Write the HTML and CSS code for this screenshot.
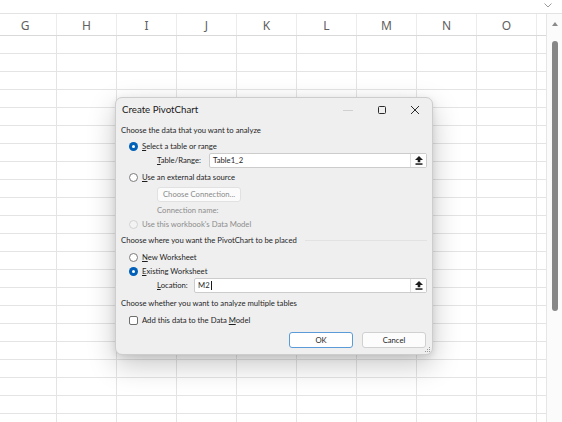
FILE: index.html
```html
<!DOCTYPE html>
<html lang="en">
<head>
<meta charset="utf-8">
<title>Create PivotChart</title>
<link rel="stylesheet" href="styles.css">
</head>
<body>
<div class="app">
  <div class="formula">
    <svg class="chev" width="8" height="5" viewBox="0 0 8 5"><path d="M0.5 0.5 L4 4 L7.5 0.5" fill="none" stroke="#9a9a9a" stroke-width="1"/></svg>
  </div>
  <div class="sheet">
    <div class="grid">
      <div class="colhead">
        <div class="ch first">G</div>
        <div class="ch">H</div>
        <div class="ch">I</div>
        <div class="ch">J</div>
        <div class="ch">K</div>
        <div class="ch">L</div>
        <div class="ch">M</div>
        <div class="ch">N</div>
        <div class="ch">O</div>
      </div>
      <div class="cells"></div>
    </div>
    <div class="vscroll">
      <svg class="up" width="6" height="4" viewBox="0 0 6 4"><path d="M3 0 L6 4 L0 4 Z" fill="#8a8a8a"/></svg>
      <div class="thumb"></div>
    </div>
  </div>

  <div class="dialog">
    <div class="titlebar">
      <span class="title">Create PivotChart</span>
      <span class="tb-icons">
        <svg class="tb-min" width="10" height="10" viewBox="0 0 10 10"><path d="M0 5.5 H10" stroke="#d0d0d0" stroke-width="1"/></svg>
        <svg class="tb-max" width="10" height="10" viewBox="0 0 10 10"><rect x="1.5" y="1.5" width="7" height="7" rx="1" fill="none" stroke="#2b2b2b" stroke-width="1"/></svg>
        <svg class="tb-close" width="10" height="10" viewBox="0 0 10 10"><path d="M1 1 L9 9 M9 1 L1 9" stroke="#2b2b2b" stroke-width="1"/></svg>
      </span>
    </div>

    <div class="body">
      <div class="row heading h-18">Choose the data that you want to analyze</div>
      <div class="row opt h-14"><span class="radio on"></span><span><u>S</u>elect a table or range</span></div>
      <div class="row field tbl">
        <span class="flabel"><u>T</u>able/Range:</span>
        <span class="input w-table"><span class="val">Table1_2</span><span class="upbtn"><svg width="8" height="9" viewBox="0 0 8 9"><path d="M4 0 L8 4 L5.3 4 L5.3 6.2 L2.7 6.2 L2.7 4 L0 4 Z" fill="#1c1c1c"/><rect x="0.5" y="7.3" width="7" height="1.5" fill="#1c1c1c"/></svg></span></span>
      </div>
      <div class="row opt h-18"><span class="radio"></span><span><u>U</u>se an external data source</span></div>
      <div class="row connrow"><span class="connbtn">Choose Connection...</span></div>
      <div class="row muted connname">Connection name:</div>
      <div class="row opt h-12 muted"><span class="radio off"></span><span>Use this workbook's Data Model</span></div>
      <div class="row heading h-20 grouped"><span>Choose where you want the PivotChart to be placed</span><span class="gline"></span></div>
      <div class="row opt h-14"><span class="radio"></span><span><u>N</u>ew Worksheet</span></div>
      <div class="row opt h-14"><span class="radio on"></span><span><u>E</u>xisting Worksheet</span></div>
      <div class="row field loc">
        <span class="flabel"><u>L</u>ocation:</span>
        <span class="input w-loc"><span class="val">M2<span class="caret"></span></span><span class="upbtn"><svg width="8" height="9" viewBox="0 0 8 9"><path d="M4 0 L8 4 L5.3 4 L5.3 6.2 L2.7 6.2 L2.7 4 L0 4 Z" fill="#1c1c1c"/><rect x="0.5" y="7.3" width="7" height="1.5" fill="#1c1c1c"/></svg></span></span>
      </div>
      <div class="row heading h-20">Choose whether you want to analyze multiple tables</div>
      <div class="row opt h-14"><span class="check"></span><span>Add this data to the Data <u>M</u>odel</span></div>
      <div class="row buttons">
        <span class="btn primary">OK</span>
        <span class="btn">Cancel</span>
      </div>
    </div>
    <svg class="grip" width="7" height="7" viewBox="0 0 7 7">
      <rect x="5" y="1" width="1" height="1" fill="#9a9a9a"/>
      <rect x="3" y="3" width="1" height="1" fill="#9a9a9a"/>
      <rect x="5" y="3" width="1" height="1" fill="#9a9a9a"/>
      <rect x="1" y="5" width="1" height="1" fill="#9a9a9a"/>
      <rect x="3" y="5" width="1" height="1" fill="#9a9a9a"/>
      <rect x="5" y="5" width="1" height="1" fill="#9a9a9a"/>
    </svg>
  </div>
</div>
</body>
</html>
```

FILE: styles.css
```css
* { box-sizing: border-box; }
html, body { margin: 0; padding: 0; background: #ffffff; }
body { font-family: "Noto Sans", "Open Sans", sans-serif; color: #1e1e1e; }

.app {
  position: relative;
  width: 562px;
  height: 422px;
  overflow: hidden;
  background: #ffffff;
}

/* formula bar remnant */
.formula {
  height: 14px;
  border-bottom: 1px solid #e3e3e3;
  display: flex;
  justify-content: flex-end;
  align-items: flex-start;
  padding: 3px 10px 0 0;
}
.chev { display: block; }

/* sheet */
.sheet {
  display: flex;
  height: 408px;
}
.grid {
  flex: 1;
  display: flex;
  flex-direction: column;
  border-right: 1px solid #e6e6e6;
}
.colhead {
  height: 22px;
  display: flex;
  border-bottom: 1px solid #d9d9d9;
  background: #ffffff;
}
.ch {
  width: 60px;
  flex: none;
  border-right: 1px solid #ececec;
  display: flex;
  align-items: center;
  justify-content: center;
  font-size: 12px;
  color: #606060;
  padding-top: 1px;
}
.ch.first { width: 57px; padding-right: 6px; }
.cells {
  flex: 1;
  background-image:
    repeating-linear-gradient(90deg, transparent 0 59px, #e4e4e4 59px 60px),
    repeating-linear-gradient(180deg, transparent 0 17px, #e4e4e4 17px 18px);
  background-position: -3px 0, 0 0;
}
.vscroll {
  width: 15px;
  flex: none;
  background: #fbfbfb;
  display: flex;
  flex-direction: column;
  align-items: center;
  padding-top: 8px;
}
.up { display: block; margin-left: 1px; }
.thumb {
  margin-top: 15px;
  width: 6px;
  height: 270px;
  border-radius: 3px;
  background: #878787;
  margin-left: 1px;
}

/* dialog */
.dialog {
  position: absolute;
  left: 115px;
  top: 97px;
  width: 318px;
  height: 258px;
  background: #efefef;
  border: 1px solid #cdcdcd;
  border-radius: 7px;
  box-shadow: 0 10px 28px rgba(0,0,0,0.22), 0 2px 6px rgba(0,0,0,0.10);
  font-family: "Lato", "Noto Sans", sans-serif;
  font-size: 7.7px;
  line-height: 11px;
  color: #1f1f1f;
}
.titlebar {
  height: 23px;
  display: flex;
  align-items: center;
  justify-content: space-between;
  padding: 0 12px 0 6px;
}
.title { font-size: 9.7px; color: #1a1a1a; }
.tb-icons { display: flex; align-items: center; gap: 23px; }
.tb-icons svg { display: block; }
.tb-min { margin-right: 1px; }

.body { padding: 0 5px 0 5px; }
.row { display: flex; align-items: center; white-space: nowrap; }
.h-12 { height: 12px; }
.h-14 { height: 14px; }
.h-18 { height: 18px; }
.h-20 { height: 20px; }
.heading { color: #1f1f1f; }
.grouped .gline {
  flex: 1;
  height: 1px;
  background: #e2e2e2;
  margin-left: 8px;
  margin-top: 1px;
}
u { text-decoration-thickness: 1px; text-underline-offset: 1px; }

.opt { padding-left: 8px; gap: 4px; }
.radio {
  width: 9px;
  height: 9px;
  border-radius: 50%;
  border: 1px solid #7b7b7b;
  background: #ffffff;
  flex: none;
  position: relative;
}
.radio.on { border: none; background: #005fb8; }
.radio.on::after {
  content: "";
  position: absolute;
  left: 3px; top: 3px;
  width: 3px; height: 3px;
  border-radius: 50%;
  background: #ffffff;
}
.radio.off { border-color: #d2d2d2; background: #f3f3f3; }
.check {
  width: 9px;
  height: 9px;
  border: 1px solid #6e6e6e;
  border-radius: 2px;
  background: #ffffff;
  flex: none;
}

.field { height: 15px; }
.flabel { padding-left: 36px; color: #1f1f1f; }
.tbl .flabel { width: 88px; }
.loc .flabel { width: 73px; }
.input {
  height: 15px;
  flex: 1;
  display: flex;
  background: #ffffff;
  border: 1px solid #cccccc;
  border-radius: 2px;
}
.val { flex: 1; padding-left: 3px; display: flex; align-items: center; }
.caret { display: inline-block; width: 1px; height: 9px; background: #1a1a1a; margin-left: 1px; }
.upbtn {
  width: 16px;
  flex: none;
  border-left: 1px solid #e0e0e0;
  display: flex;
  align-items: center;
  justify-content: center;
  background: #fdfdfd;
}
.upbtn svg { display: block; }

.muted { color: #8d8d8d; }
.connrow { height: 16px; padding-left: 36px; align-items: flex-end; }
.connbtn {
  width: 84px;
  height: 15px;
  border: 1px solid #e1e1e1;
  border-radius: 3px;
  background: #fbfbfb;
  color: #8a8a8a;
  display: flex;
  align-items: center;
  justify-content: center;
}
.connname { height: 16px; padding-left: 36px; }

.buttons {
  justify-content: flex-end;
  gap: 9px;
  margin-top: 5px;
  height: 16px;
  padding-right: 1px;
}
.btn {
  width: 64px;
  height: 16px;
  border: 1px solid #d0d0d0;
  border-radius: 3px;
  background: #fcfcfc;
  display: flex;
  align-items: center;
  justify-content: center;
  color: #1f1f1f;
}
.btn.primary { border-color: #5a9bd8; background: #ffffff; }

.grip { position: absolute; right: 1px; bottom: 1px; display: block; }
```
